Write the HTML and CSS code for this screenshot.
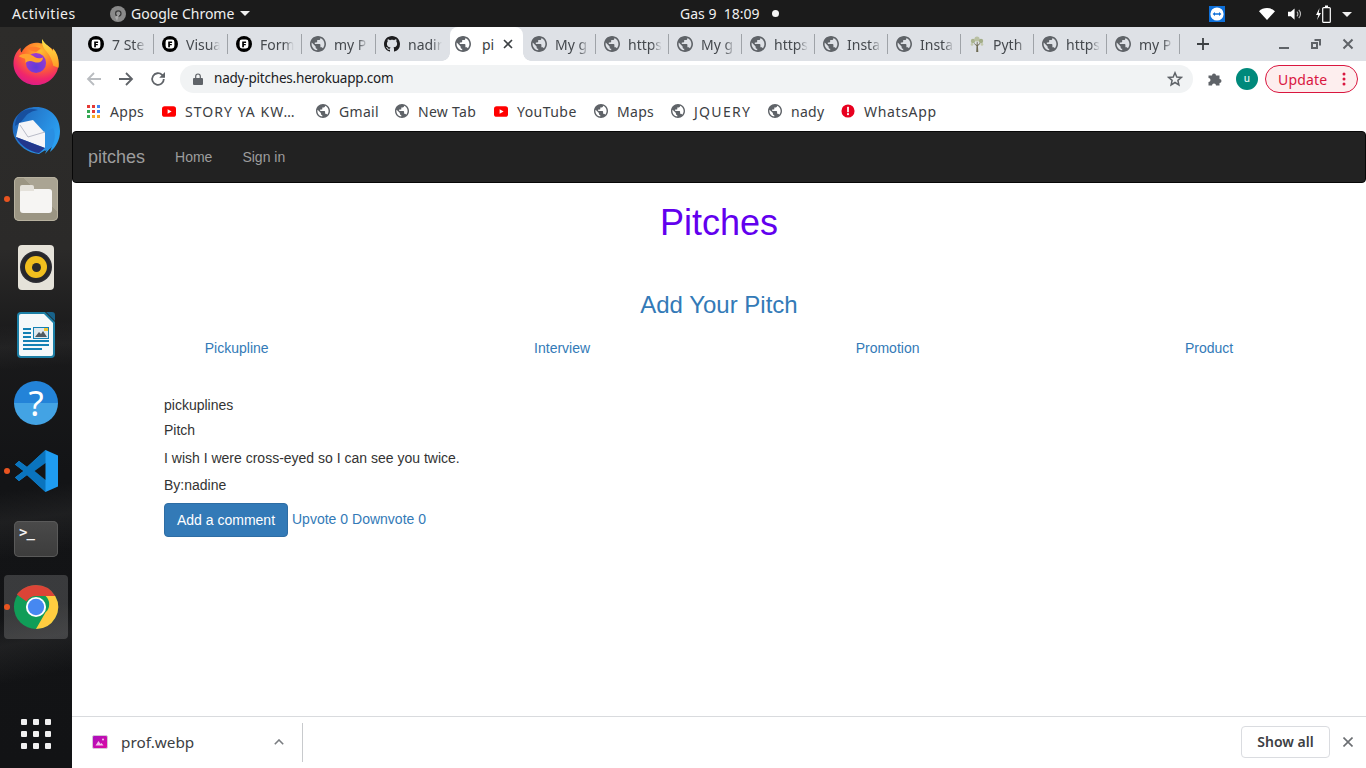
FILE: index.html
```html
<!DOCTYPE html>
<html lang="en">
<head>
<meta charset="utf-8">
<title>pitches</title>
<link rel="stylesheet" href="styles.css">
</head>
<body>
<svg class="defs" width="0" height="0" aria-hidden="true">
  <symbol id="globe" viewBox="2 2 20 20"><path d="M12 2C6.48 2 2 6.48 2 12s4.48 10 10 10 10-4.48 10-10S17.52 2 12 2zm-1 17.93c-3.95-.49-7-3.85-7-7.93 0-.62.08-1.21.21-1.79L9 15v1c0 1.1.9 2 2 2v1.93zm6.9-2.54c-.26-.81-1-1.39-1.9-1.39h-1v-3c0-.55-.45-1-1-1H8v-2h2c.55 0 1-.45 1-1V7h2c1.1 0 2-.9 2-2v-.41c2.93 1.19 5 4.06 5 7.41 0 2.08-.8 3.97-2.1 5.39z"/></symbol>
  <symbol id="filament" viewBox="0 0 16 16"><circle cx="8" cy="8" r="8" fill="#000"/><rect x="3.6" y="3.6" width="8.8" height="8.8" rx="2.4" fill="#fff"/><path d="M6.2 5.500h3.900v1.500H7.900v.9h1.900v1.400H7.900v1.900H6.200z" fill="#000"/></symbol>
  <symbol id="github" viewBox="0 0 16 16"><path d="M8 0C3.58 0 0 3.58 0 8c0 3.54 2.29 6.53 5.47 7.59.4.07.55-.17.55-.38 0-.19-.01-.82-.01-1.49-2.01.37-2.53-.49-2.69-.94-.09-.23-.48-.94-.82-1.13-.28-.15-.68-.52-.01-.53.63-.01 1.08.58 1.23.82.72 1.21 1.87.87 2.33.66.07-.52.28-.87.51-1.07-1.78-.2-3.64-.89-3.64-3.95 0-.87.31-1.59.82-2.15-.08-.2-.36-1.02.08-2.12 0 0 .67-.21 2.2.82.64-.18 1.32-.27 2-.27.68 0 1.36.09 2 .27 1.53-1.04 2.2-.82 2.2-.82.44 1.1.16 1.92.08 2.12.51.56.82 1.27.82 2.15 0 3.07-1.87 3.75-3.65 3.95.29.25.54.73.54 1.48 0 1.07-.01 1.93-.01 2.2 0 .21.15.46.55.38A8.013 8.013 0 0016 8c0-4.42-3.58-8-8-8z"/></symbol>
  <symbol id="tree" viewBox="0 0 16 16"><path d="M7.200 16l.3-6-2.600-2.400.5-.4 2.200 1.700.2-3h.8l.1 3 2.200-1.800.5.4-2.500 2.500.4 6z" fill="#6d6a52"/><circle cx="4" cy="5" r="2.200" fill="#a9b28e"/><circle cx="8" cy="3" r="2.600" fill="#b9c0a2"/><circle cx="12" cy="5" r="2.200" fill="#a3ad88"/><circle cx="3" cy="8.400" r="1.300" fill="#c2c8ad"/><circle cx="13" cy="8.400" r="1.300" fill="#c2c8ad"/></symbol>
  <symbol id="yt" viewBox="0 0 16 12"><rect width="16" height="12" rx="3" fill="#f00"/><path d="M6.400 3.400L11 6 6.400 8.600z" fill="#fff"/></symbol>
</svg>

<header class="topbar">
  <span class="top-activities">Activities</span>
  <span class="top-app">
    <svg class="top-chrome" viewBox="0 0 16 16"><circle cx="8" cy="8" r="8" fill="#8a8a8a"/><circle cx="8.300" cy="7.600" r="3.300" fill="#3a3a3a"/><circle cx="8.300" cy="7.600" r="2" fill="#9a9a9a"/><path d="M5 11l3-2 1 0-2 6z" fill="#aaa"/></svg>
    <span>Google Chrome</span>
    <i class="caret"></i>
  </span>
  <span class="top-clock">Gas 9&nbsp; 18:09<i class="clock-dot"></i></span>
  <span class="tray">
    <svg class="tray-tv" viewBox="0 0 16 16"><rect width="16" height="16" fill="#0e6fd8"/><circle cx="8" cy="8" r="6.600" fill="#fff"/><path d="M3.600 8l2.400-2v1.300h4V6l2.400 2-2.400 2V8.700H6V10z" fill="#0e6fd8"/></svg>
    <svg class="tray-wifi" viewBox="0 0 16 12"><path d="M8 12L0 3.200C2 1.200 4.900 0 8 0s6 1.200 8 3.200z" fill="#fff"/></svg>
    <svg class="tray-vol" viewBox="0 0 16 14"><path d="M0 4.500h3L7 1v12L3 9.500H0z" fill="#fff"/><path d="M9.500 4.500a3.500 3.500 0 010 5M11.500 2.500a6.500 6.500 0 010 9" fill="none" stroke="#bbb" stroke-width="1.200"/></svg>
    <svg class="tray-bat" viewBox="0 0 15 18"><path d="M3.500 3L0 10h2.300L1 15l4-7H2.700z" fill="#fff"/><rect x="6.700" y="2.600" width="7.600" height="14.800" rx="1" fill="none" stroke="#fff" stroke-width="1.200"/><rect x="9" y="0.500" width="3" height="2" fill="#fff"/></svg>
    <i class="caret"></i>
  </span>
</header>

<div class="desktop">
  <nav class="dock">
    <div class="dock-item dock-first">
      <svg class="ic-46" viewBox="0 0 48 48">
        <defs>
          <radialGradient id="ffb" cx="60%" cy="20%" r="85%"><stop offset="0" stop-color="#ffc02e"/><stop offset=".45" stop-color="#ff6a2c"/><stop offset=".78" stop-color="#f0266b"/><stop offset="1" stop-color="#d91b8c"/></radialGradient>
          <linearGradient id="ffy" x1="0" y1="0" x2="0" y2="1"><stop offset="0" stop-color="#ffe84a"/><stop offset="1" stop-color="#ff9a25"/></linearGradient>
          <radialGradient id="ffp" cx="50%" cy="70%" r="70%"><stop offset="0" stop-color="#5f3ad8"/><stop offset="1" stop-color="#a03ad0"/></radialGradient>
        </defs>
        <path d="M24 4C36 4 47.500 13 47.500 25.500 47.500 38 36.500 48 24 48 11.500 48 .5 38 .5 25.500.5 19 3 13 8 9c-.5 2 0 4 1 5C12 8 18 4 24 4z" fill="url(#ffb)"/>
        <path d="M30.500 0c-1 5 1 9 4.500 13 3.500 4 6 9 7 15l5.500 2c1-8-1-15-5.500-20l-.5 3C39.500 8 33 6 30.500 0z" fill="url(#ffy)"/>
        <circle cx="24" cy="25" r="10.500" fill="url(#ffp)"/>
        <path d="M6 18c5-4 12-3 17 1 3 2 7 1 8 0 1 4-4 7-9 5-4-2-7-1-9 1 0-3 0-5-2-5-1 0-3-1-5-2z" fill="#ffa12e"/>
        <path d="M15 9.500c4-2 10-2 14 .5l-5 3.500c-3 0-7-1.500-9-4z" fill="#ff7b2b"/>
      </svg>
    </div>
    <div class="dock-item">
      <svg class="ic-48" viewBox="0 0 48 48">
        <defs>
          <linearGradient id="tbb" x1="0" y1="0" x2="1" y2=".5"><stop offset="0" stop-color="#1f5fb4"/><stop offset="1" stop-color="#2b9ff0"/></linearGradient>
        </defs>
        <path d="M24 0C38 0 48 10 48 24c0 9-4 16-10 21l2-6-7 8 2-5-8 5C16 46 6 39 2 29-1 20 1 11 8 6c4-4 10-6 16-6z" fill="url(#tbb)"/>
        <path d="M8 6c5-4 12-5 18-3-6 1-10 3-13 7l-5 6-5 3C3 14 5 9 8 6z" fill="#174f9e"/>
        <path d="M7 16l14-3 12 13v15L4 30z" fill="#f5f5f7"/>
        <path d="M8 18l8 12 17-5" fill="none" stroke="#b9bcc8" stroke-width="1"/>
        <path d="M33 26l8-5c3 6 2 14-2 20l-6 3z" fill="#2a8fe2"/>
        <path d="M4 30l29 11-6 5c-9-1-18-7-23-16z" fill="#22378c"/>
      </svg>
    </div>
    <div class="dock-item">
      <div class="files-tile"><span class="folder"><i class="folder-tab"></i></span></div>
      <i class="run-dot"></i>
    </div>
    <div class="dock-item">
      <div class="rhythm-tile"><i class="spk"><i class="spk-y"><i class="spk-c"></i></i></i></div>
    </div>
    <div class="dock-item">
      <svg class="ic-46" viewBox="0 0 38 46">
        <path d="M4 0h24l10 10v32a4 4 0 01-4 4H4a4 4 0 01-4-4V4a4 4 0 014-4z" fill="#1c7fa6"/>
        <path d="M4 2h23l9 9v31a2 2 0 01-2 2H4a2 2 0 01-2-2V4a2 2 0 012-2z" fill="#f4f8fa"/>
        <path d="M29 0h6a3 3 0 013 3v6z" fill="#18628a"/>
        <g fill="#1380b4"><rect x="6" y="16" width="8" height="2"/><rect x="6" y="20" width="8" height="2"/><rect x="6" y="24" width="8" height="2"/><rect x="6" y="28" width="26" height="2"/><rect x="6" y="32" width="26" height="2"/><rect x="6" y="36" width="19" height="2"/></g>
        <rect x="16.500" y="15.500" width="15" height="11" fill="#dfe8ee" stroke="#1380b4"/>
        <path d="M18 25l4-5 2 2 2-3 4 6z" fill="#505a62"/>
        <rect x="27" y="16" width="4" height="3" fill="#f3c531"/>
      </svg>
    </div>
    <div class="dock-item">
      <div class="help-ball"><span class="help-q">?</span></div>
    </div>
    <div class="dock-item">
      <svg class="ic-44" viewBox="0 0 44 44">
        <path d="M31.500 1L44 6.500v31L31.500 43 13 26l-8 6-4-3.500 8.500-6.500L1 15.500 5 12l8 6z" fill="#1f9cf0"/>
        <path d="M31.500 1v13L20.500 22 31.500 31v12L13 26l-8 6-4-3.500 8.500-6.500L1 15.500 5 12l8 6z" fill="#0a74be"/>
        <path d="M31.500 14L20.500 22l11 9z" fill="#141516"/>
      </svg>
      <i class="run-dot"></i>
    </div>
    <div class="dock-item">
      <div class="term-tile"><span class="term-prompt">&gt;_</span></div>
    </div>
    <div class="dock-item dock-active">
      <svg class="ic-46" viewBox="0 0 48 48">
        <circle cx="24" cy="24" r="23" fill="#109d58"/>
        <path d="M24 1a23 23 0 0120 11.500H24a11.500 11.500 0 00-10 5.800L4 11C8.200 5 15.600 1 24 1z" fill="#db4437"/>
        <path d="M44 12.500A23 23 0 0124 47l10-17.500a11.500 11.500 0 000-17z" fill="#ffcd40"/>
        <circle cx="24" cy="24" r="10.500" fill="#fff"/>
        <circle cx="24" cy="24" r="8.500" fill="#4688f1"/>
      </svg>
      <i class="run-dot"></i>
    </div>
    <div class="dock-grid">
      <i></i><i></i><i></i><i></i><i></i><i></i><i></i><i></i><i></i>
    </div>
  </nav>

  <div class="browser">
    <div class="tabstrip">
      <div class="tab tab-w"><svg class="fav"><use href="#filament"/></svg><span class="tab-title">7 Ste</span></div>
      <div class="tab tab-w"><svg class="fav"><use href="#filament"/></svg><span class="tab-title">Visua</span></div>
      <div class="tab tab-w"><svg class="fav"><use href="#filament"/></svg><span class="tab-title">Form</span></div>
      <div class="tab tab-w"><svg class="fav gl"><use href="#globe"/></svg><span class="tab-title">my P</span></div>
      <div class="tab tab-w tab-noline"><svg class="fav"><use href="#github"/></svg><span class="tab-title">nadir</span></div>
      <div class="tab tab-active"><svg class="fav gl"><use href="#globe"/></svg><span class="tab-title">pi</span><svg class="tab-x" viewBox="0 0 10 10"><path d="M1 1l8 8M9 1l-8 8"/></svg></div>
      <div class="tab"><svg class="fav gl"><use href="#globe"/></svg><span class="tab-title">My g</span></div>
      <div class="tab"><svg class="fav gl"><use href="#globe"/></svg><span class="tab-title">https</span></div>
      <div class="tab"><svg class="fav gl"><use href="#globe"/></svg><span class="tab-title">My g</span></div>
      <div class="tab"><svg class="fav gl"><use href="#globe"/></svg><span class="tab-title">https</span></div>
      <div class="tab"><svg class="fav gl"><use href="#globe"/></svg><span class="tab-title">Insta</span></div>
      <div class="tab"><svg class="fav gl"><use href="#globe"/></svg><span class="tab-title">Insta</span></div>
      <div class="tab"><svg class="fav"><use href="#tree"/></svg><span class="tab-title">Pyth</span></div>
      <div class="tab"><svg class="fav gl"><use href="#globe"/></svg><span class="tab-title">https</span></div>
      <div class="tab"><svg class="fav gl"><use href="#globe"/></svg><span class="tab-title">my P</span></div>
      <svg class="newtab" viewBox="0 0 12 12"><path d="M6 0v12M0 6h12"/></svg>
      <div class="winctl">
        <svg viewBox="0 0 10 10"><path d="M0 9h10"/></svg>
        <svg viewBox="0 0 10 10"><path d="M1 4h5v5H1zM3.500 1H9v5.500"/></svg>
        <svg viewBox="0 0 10 10"><path d="M.5.500l9 9M9.500.500l-9 9"/></svg>
      </div>
    </div>

    <div class="toolbar">
      <svg class="tb-ic tb-back" viewBox="0 0 16 16"><path d="M15 8H2M8 2L2 8l6 6"/></svg>
      <svg class="tb-ic" viewBox="0 0 16 16"><path d="M1 8h13M8 2l6 6-6 6"/></svg>
      <svg class="tb-ic" viewBox="0 0 16 16"><path d="M13.800 8a5.800 5.800 0 11-1.700-4.100L14 5.800"/><path class="fill" d="M15 1v5.800H9.200z"/></svg>
      <div class="omnibox">
        <svg class="lock" viewBox="0 0 10 12"><path d="M1 5h8a1 1 0 011 1v5a1 1 0 01-1 1H1a1 1 0 01-1-1V6a1 1 0 011-1z" fill="#5f6368"/><path d="M2.700 5V3.300a2.300 2.300 0 014.600 0V5" fill="none" stroke="#5f6368" stroke-width="1.200"/></svg>
        <span class="url">nady-pitches.herokuapp.com</span>
        <svg class="star" viewBox="0 0 16 16"><path d="M8 1.800l1.800 4.200 4.600.4-3.500 3 1 4.500L8 11.500l-3.900 2.400 1-4.500-3.500-3 4.600-.4z"/></svg>
      </div>
      <svg class="puzzle" viewBox="0 0 16 16"><path d="M1 5h3.500a2 2 0 114 0H12v3.500a2 2 0 110 4V15H8.500a2 2 0 10-4 0H1v-3.500a2 2 0 100-4z" transform="translate(0.500 -0.500)"/></svg>
      <span class="avatar">u</span>
      <span class="update"><span>Update</span><svg class="update-dots" viewBox="0 0 4 14"><circle cx="2" cy="2" r="1.500"/><circle cx="2" cy="7" r="1.500"/><circle cx="2" cy="12" r="1.500"/></svg></span>
    </div>

    <div class="bookmarks">
      <span class="bm bm-apps"><span class="apps-ic"><i class="r"></i><i class="r"></i><i class="b"></i><i class="g"></i><i class="r"></i><i class="b"></i><i class="g"></i><i class="y"></i><i class="y"></i></span><span class="bm-text">Apps</span></span>
      <span class="bm bm-story"><svg class="bm-yt"><use href="#yt"/></svg><span class="bm-text">STORY YA KW…</span></span>
      <span class="bm bm-gmail"><svg class="bm-gl"><use href="#globe"/></svg><span class="bm-text">Gmail</span></span>
      <span class="bm bm-new"><svg class="bm-gl"><use href="#globe"/></svg><span class="bm-text">New Tab</span></span>
      <span class="bm bm-you"><svg class="bm-yt"><use href="#yt"/></svg><span class="bm-text">YouTube</span></span>
      <span class="bm bm-maps"><svg class="bm-gl"><use href="#globe"/></svg><span class="bm-text">Maps</span></span>
      <span class="bm bm-jq"><svg class="bm-gl"><use href="#globe"/></svg><span class="bm-text">JQUERY</span></span>
      <span class="bm bm-nady"><svg class="bm-gl"><use href="#globe"/></svg><span class="bm-text">nady</span></span>
      <span class="bm bm-wapp"><svg class="bm-wa" viewBox="0 0 16 16"><circle cx="8" cy="8" r="7.500" fill="#e8001f"/><rect x="7" y="3.200" width="2" height="6.300" rx=".6" fill="#fff"/><circle cx="8" cy="11.600" r="1.200" fill="#fff"/></svg><span class="bm-text">WhatsApp</span></span>
    </div>

    <main class="page">
      <div class="navbar">
        <a class="brand">pitches</a>
        <a class="nav-link">Home</a>
        <a class="nav-link">Sign in</a>
      </div>
      <h1 class="page-title">Pitches</h1>
      <h3 class="add-title">Add Your Pitch</h3>
      <div class="cats">
        <a>Pickupline</a>
        <a>Interview</a>
        <a>Promotion</a>
        <a>Product</a>
      </div>
      <section class="pitch">
        <p class="p-cat">pickuplines</p>
        <p class="p-head">Pitch</p>
        <p class="p-body">I wish I were cross-eyed so I can see you twice.</p>
        <p class="p-by">By:nadine</p>
        <div class="p-actions">
          <a class="btn">Add a comment</a>
          <a class="vote">Upvote 0</a>
          <a class="vote">Downvote 0</a>
        </div>
      </section>
    </main>

    <footer class="downloads">
      <svg class="dl-file" viewBox="0 0 16 14"><defs><linearGradient id="dlg" x1="0" y1="0" x2="1" y2="1"><stop offset="0" stop-color="#a80fc0"/><stop offset="1" stop-color="#e00aa0"/></linearGradient></defs><rect x=".5" y=".5" width="15" height="13" rx="1.500" fill="url(#dlg)" stroke="#d6c6d6"/><path d="M3.500 10.500l3-4.500 2 3 1-1 2 2.500z" fill="#f3c4ea"/><circle cx="11" cy="4.500" r="1" fill="#f3c4ea"/></svg>
      <span class="dl-name">prof.webp</span>
      <svg class="dl-chev" viewBox="0 0 10 6"><path d="M.8 5.200L5 1l4.200 4.200"/></svg>
      <i class="dl-sep"></i>
      <span class="dl-show">Show all</span>
      <svg class="dl-x" viewBox="0 0 10 10"><path d="M.5.500l9 9M9.500.500l-9 9"/></svg>
    </footer>
  </div>
</div>
</body>
</html>
```
FILE: styles.css
```css
* { box-sizing: border-box; }
html, body { margin: 0; height: 768px; overflow: hidden; }
body { display: flex; flex-direction: column; background: #fff; font-family: "Noto Sans", sans-serif; }
.defs { position: absolute; }
i { display: block; font-style: normal; }

/* top bar */
.topbar { flex: 0 0 27px; height: 27px; display: flex; align-items: center; background: #1b1b1b; color: #f0f0f0; font-size: 14px; position: relative; }
.top-activities { margin-left: 12px; width: 97px; letter-spacing: .55px; }
.top-app { display: flex; align-items: center; width: 150px; }
.top-chrome { width: 16px; height: 16px; margin-left: 1px; margin-right: 5px; }
.top-app .caret { margin-left: 6px; }
.caret { width: 0; height: 0; border-left: 5px solid transparent; border-right: 5px solid transparent; border-top: 5px solid #f0f0f0; }
.top-clock { margin-left: 421px; width: 110px; display: flex; align-items: center; white-space: nowrap; }
.clock-dot { width: 7px; height: 7px; border-radius: 50%; background: #f4f4f4; margin-left: 13px; }
.tray { display: flex; align-items: center; margin-left: 0; position: absolute; left: 1209px; top: 5px; }
.tray-tv { width: 16px; height: 16px; }
.tray-wifi { width: 16px; height: 12px; margin-left: 34px; }
.tray-vol { width: 15px; height: 14px; margin-left: 13px; }
.tray-bat { width: 15px; height: 18px; margin-left: 13px; }
.tray .caret { margin-left: 11px; }

.desktop { flex: 1; display: flex; min-height: 0; }

/* dock */
.dock { flex: 0 0 72px; display: flex; flex-direction: column; align-items: center; padding-top: 2px;
  background:
    linear-gradient(172deg, transparent 62%, rgba(70,70,70,.22) 66%, transparent 71%),
    linear-gradient(168deg, transparent 78%, rgba(70,70,70,.25) 82%, transparent 87%),
    linear-gradient(176deg, transparent 40%, rgba(80,80,80,.16) 43%, transparent 46%),
    linear-gradient(180deg, #2d2c2a 0%, #2b2a29 30%, #1a1a1b 42%, #131416 60%, #121315 100%);
}
.dock-item { flex: 0 0 68px; width: 72px; display: flex; align-items: center; justify-content: center; position: relative; }
.dock-first { padding-bottom: 2px; }
.dock-active::before { content: ""; position: absolute; left: 4px; top: 2px; width: 64px; height: 64px; border-radius: 4px; background: rgba(255,255,255,.17); }
.dock-item svg { position: relative; }
.ic-46 { width: 46px; height: 46px; }
.ic-48 { width: 48px; height: 48px; }
.ic-44 { width: 44px; height: 44px; }
.run-dot { position: absolute; left: 4px; top: 31px; width: 6px; height: 6px; border-radius: 50%; background: #e95420; }
.files-tile { width: 44px; height: 44px; border-radius: 5px; background: linear-gradient(45deg, #9b9583 0 60%, #aaa493 60% 100%); display: flex; align-items: center; justify-content: center; box-shadow: inset 0 0 0 1px #b7b19f; }
.folder { width: 32px; height: 24px; margin-top: 4px; background: #f6f5f3; border-radius: 3px; position: relative; }
.folder-tab { position: absolute; left: 0; top: -4px; width: 14px; height: 6px; border-radius: 2px 2px 0 0; background: #e4e1da; }
.rhythm-tile { width: 36px; height: 45px; border-radius: 4px; background: #e5e2d9; display: flex; align-items: center; justify-content: center; }
.spk { width: 32px; height: 32px; border-radius: 50%; background: radial-gradient(circle, #26262b 62%, #5d5d66 100%); display: flex; align-items: center; justify-content: center; }
.spk-y { width: 22px; height: 22px; border-radius: 50%; background: #f0be1e; display: flex; align-items: center; justify-content: center; }
.spk-c { width: 9px; height: 9px; border-radius: 50%; background: #2a2a2a; }
.help-ball { width: 44px; height: 44px; border-radius: 50%; background: linear-gradient(180deg, #2383d8 0 50%, #43a3e4 50% 100%); display: flex; align-items: center; justify-content: center; }
.help-q { color: #fff; font: 35px/44px "Noto Sans", sans-serif; }
.term-tile { width: 44px; height: 36px; border-radius: 5px; background: linear-gradient(180deg, #4a4a4a, #3c3c3c); box-shadow: inset 0 0 0 1px #5a5a5a; padding: 2px 0 0 5px; display: flex; align-items: flex-start; }
.term-prompt { color: #f2f2f2; font: bold 14px/18px "DejaVu Sans Mono", monospace; letter-spacing: -1px; }
.dock-grid { margin-top: auto; margin-bottom: 19px; width: 30px; display: grid; grid-template-columns: repeat(3, 6px); justify-content: space-between; row-gap: 6px; }
.dock-grid i { width: 6px; height: 6px; border-radius: 1px; background: #f0f0f0; }

/* browser chrome */
.browser { flex: 1; min-width: 0; display: flex; flex-direction: column; background: #fff; }
.tabstrip { flex: 0 0 34px; display: flex; background: #dee1e6; padding-left: 8px; position: relative; }
.tab { flex: 0 0 73px; height: 34px; display: flex; align-items: center; padding-left: 8px; position: relative; }
.tab-w { flex-basis: 74px; }
.tab::after { content: ""; position: absolute; right: 0; top: 7px; height: 20px; width: 1px; background: #9fa3a8; }
.tab-noline::after { display: none; }
.fav { width: 16px; height: 16px; flex: none; fill: #1d1d1f; }
.fav.gl { fill: #5f6368; }
.tab-title { margin-left: 8px; width: 34px; overflow: hidden; white-space: nowrap; font-size: 14px; color: #45494e; -webkit-mask-image: linear-gradient(90deg, #000 70%, transparent 100%); mask-image: linear-gradient(90deg, #000 70%, transparent 100%); }
.tab-active { background: #fff; border-radius: 8px 8px 0 0; padding-left: 5px; }
.tab-active::before { content: ""; position: absolute; left: -8px; bottom: 0; width: 8px; height: 8px; background: radial-gradient(circle at 0 0, transparent 7.500px, #fff 8px); }
.tab-active::after { display: block; top: auto; bottom: 0; right: -8px; width: 8px; height: 8px; background: radial-gradient(circle at 100% 0, transparent 7.500px, #fff 8px); }
.tab-active .tab-title { width: 16px; margin-left: 11px; mask-image: none; -webkit-mask-image: none; color: #3c4043; }
.tab-x { width: 10px; height: 10px; margin-left: 5px; fill: none; stroke: #3c4043; stroke-width: 1.600; }
.newtab { width: 12px; height: 12px; margin: 11px 0 0 17px; fill: none; stroke: #3c4043; stroke-width: 1.800; }
.winctl { margin-left: auto; display: flex; align-items: center; gap: 22px; padding-right: 13px; }
.winctl svg { width: 10px; height: 10px; fill: none; stroke: #5f6368; stroke-width: 2; overflow: visible; }

.toolbar { flex: 0 0 36px; display: flex; align-items: center; padding-left: 14px; padding-right: 8px; background: #fff; }
.tb-ic { width: 16px; height: 16px; margin-right: 16px; fill: none; stroke: #5f6368; stroke-width: 1.800; flex: none; }
.tb-ic .fill { fill: #5f6368; stroke: none; }
.tb-back { stroke: #b9bcc0; }
.omnibox { width: 1013px; height: 28px; margin-left: -2px; border-radius: 14px; background: #f1f3f4; display: flex; align-items: center; padding: 0 10px 0 13px; flex: none; }
.lock { width: 10px; height: 12px; }
.url { margin: 0 0 2px 11px; font-size: 13.500px; letter-spacing: -.2px; color: #202124; }
.star { width: 16px; height: 16px; margin-left: auto; fill: none; stroke: #5f6368; stroke-width: 1.500; }
.puzzle { width: 16px; height: 16px; margin-left: 14px; fill: #5f6368; flex: none; }
.avatar { width: 22px; height: 22px; margin-left: 13px; border-radius: 50%; background: #00897b; color: #e6f4f1; font-size: 10px; font-weight: 500; line-height: 21px; text-align: center; flex: none; }
.update { width: 93px; height: 28px; margin-left: 7px; border: 1px solid #d9163f; border-radius: 14px; background: #fdeeee; color: #d9163f; font-size: 14px; letter-spacing: .2px; display: flex; align-items: center; padding-left: 12px; flex: none; }
.update-dots { width: 4px; height: 14px; margin-left: auto; margin-right: 11px; fill: #d9163f; }

.bookmarks { flex: 0 0 34px; display: flex; align-items: center; padding: 0 0 6px 15px; background: #fff; font-size: 14px; color: #3c4043; }
.bm { display: flex; align-items: center; flex: none; }
.bm-text { margin-left: 9px; white-space: nowrap; letter-spacing: .3px; }
.bm-apps { width: 75px; }
.bm-apps .bm-text { margin-left: 10px; }
.bm-story { width: 154px; }
.bm-story .bm-text { letter-spacing: 1.050px; }
.bm-gmail { width: 79px; }
.bm-new { width: 99px; }
.bm-you { width: 100px; }
.bm-you .bm-text { letter-spacing: .45px; }
.bm-maps { width: 77px; }
.bm-jq { width: 97px; }
.bm-jq .bm-text { letter-spacing: 1.300px; }
.bm-nady { width: 73px; }
.bm-wapp .bm-text { letter-spacing: .65px; }
.apps-ic { width: 13px; height: 13px; display: grid; grid-template-columns: repeat(3, 3px); grid-auto-rows: 3px; gap: 2px; }
.apps-ic .r { background: #e53935; } .apps-ic .g { background: #34a853; } .apps-ic .y { background: #f9a825; } .apps-ic .b { background: #4285f4; }
.bm-yt { width: 14px; height: 11px; }
.bm-gl { width: 14px; height: 14px; fill: #5f6368; }
.bm-wa { width: 14px; height: 14px; }

/* page */
.page { flex: 1; min-height: 0; font-family: "Liberation Sans", sans-serif; font-size: 14px; line-height: 20px; color: #333; }
.page a { color: #337ab7; }
.navbar { height: 52px; display: flex; align-items: center; padding-left: 15px; background: #222; border: 1px solid #080808; border-radius: 4px; }
.page .brand { color: #9d9d9d; font-size: 18px; margin-right: 30px; }
.page .nav-link { color: #9d9d9d; margin-right: 30px; }
.page-title { margin: 20px 0 0; text-align: center; font-size: 36px; line-height: 40px; font-weight: 500; color: #6200ee; }
.add-title { margin: 49px 0 0; text-align: center; font-size: 24px; line-height: 26px; font-weight: 500; color: #337ab7; }
.cats { margin-top: 20px; display: flex; justify-content: space-around; }
.pitch { margin-top: 37px; padding-left: 92px; }
.pitch p { margin: 0; }
.pitch .p-head { margin-top: 5px; }
.pitch .p-body { margin-top: 8px; }
.pitch .p-by { margin-top: 7px; }
.p-actions { margin-top: 8px; display: flex; align-items: flex-start; gap: 4px; }
.vote { margin-top: 6px; }
.page .btn { width: 124px; height: 34px; border: 1px solid #2e6da4; border-radius: 4px; background: #337ab7; color: #fff; text-align: center; line-height: 32px; }

/* download bar */
.downloads { flex: 0 0 52px; display: flex; align-items: center; border-top: 1px solid #d9dbde; background: #fff; padding: 0 0 1px 20px; color: #3c4043; }
.dl-file { width: 16px; height: 14px; }
.dl-name { margin-left: 13px; width: 153px; font-size: 15.300px; white-space: nowrap; }
.dl-chev { width: 10px; height: 6px; fill: none; stroke: #7a7d81; stroke-width: 1.600; }
.dl-sep { width: 1px; height: 39px; margin-left: 18px; background: #c8cacd; }
.dl-show { margin-left: auto; width: 89px; height: 32px; border: 1px solid #dadce0; border-radius: 4px; font-size: 14px; font-weight: 600; line-height: 29px; text-align: center; }
.dl-x { width: 10px; height: 10px; margin: 0 13px 0 13px; fill: none; stroke: #6b6e72; stroke-width: 1.600; }
```
